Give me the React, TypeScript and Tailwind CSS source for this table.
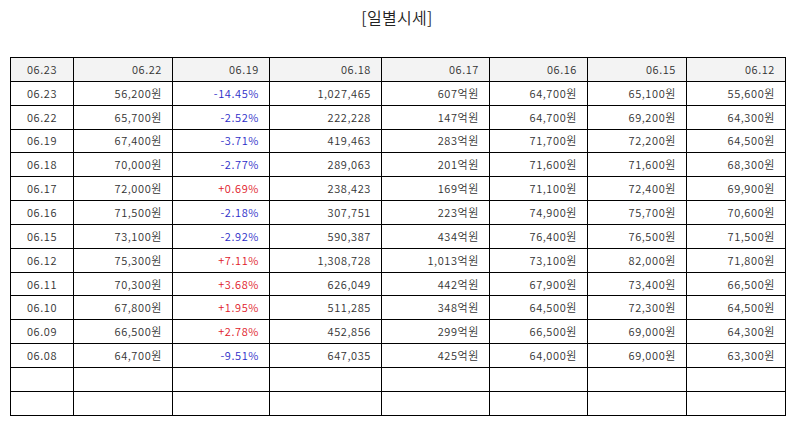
const HEAD = ['06.23', '06.22', '06.19', '06.18', '06.17', '06.16', '06.15', '06.12'];

const ROWS = [
  ['06.23', '56,200원', '-14.45%', '1,027,465', '607억원', '64,700원', '65,100원', '55,600원'],
  ['06.22', '65,700원', '-2.52%', '222,228', '147억원', '64,700원', '69,200원', '64,300원'],
  ['06.19', '67,400원', '-3.71%', '419,463', '283억원', '71,700원', '72,200원', '64,500원'],
  ['06.18', '70,000원', '-2.77%', '289,063', '201억원', '71,600원', '71,600원', '68,300원'],
  ['06.17', '72,000원', '+0.69%', '238,423', '169억원', '71,100원', '72,400원', '69,900원'],
  ['06.16', '71,500원', '-2.18%', '307,751', '223억원', '74,900원', '75,700원', '70,600원'],
  ['06.15', '73,100원', '-2.92%', '590,387', '434억원', '76,400원', '76,500원', '71,500원'],
  ['06.12', '75,300원', '+7.11%', '1,308,728', '1,013억원', '73,100원', '82,000원', '71,800원'],
  ['06.11', '70,300원', '+3.68%', '626,049', '442억원', '67,900원', '73,400원', '66,500원'],
  ['06.10', '67,800원', '+1.95%', '511,285', '348억원', '64,500원', '72,300원', '64,500원'],
  ['06.09', '66,500원', '+2.78%', '452,856', '299억원', '66,500원', '69,000원', '64,300원'],
  ['06.08', '64,700원', '-9.51%', '647,035', '425억원', '64,000원', '69,000원', '63,300원'],
  ['', '', '', '', '', '', '', ''],
  ['', '', '', '', '', '', '', ''],
];

const WIDTHS = ['w-[63px]', 'w-[99px]', 'w-[97px]', 'w-[112px]', 'w-[108px]', 'w-[98px]', 'w-[99px]', 'w-[99px]'];

function rateColor(v: string) {
  if (v.startsWith('-')) return 'text-[#2d2dc8]';
  if (v.startsWith('+')) return 'text-[#e0202a]';
  return 'text-[#333]';
}

export default function App() {
  return (
    <div className="w-[794px] h-[425px] bg-white text-[#333] overflow-hidden" style={{ fontFamily: '"Noto Sans CJK KR", "Noto Sans", sans-serif' }}>
      <h1 className="h-[57px] pt-[5px] text-center text-[16px] font-[350] text-[#222] leading-[24px] tracking-[0.3px]">[일별시세]</h1>
      <table className="ml-[10px] w-[775px] table-fixed border-collapse text-[11px] leading-none font-[350] tracking-[0.6px]">
        <colgroup>
          {WIDTHS.map((w, i) => (
            <col key={i} className={w} />
          ))}
        </colgroup>
        <thead>
          <tr className="bg-[#f3f3f3]">
            {HEAD.map((h, i) => (
              <th key={i} className={`h-[23.85px] border border-black font-[350] px-[10px] ${i === 0 ? 'text-center' : 'text-right'}`}>
                {h}
              </th>
            ))}
          </tr>
        </thead>
        <tbody>
          {ROWS.map((r, ri) => (
            <tr key={ri}>
              {r.map((c, ci) => (
                <td
                  key={ci}
                  className={`h-[23.85px] border border-black px-[10px] ${ci === 0 ? 'text-center' : 'text-right'} ${ci === 2 ? rateColor(c) : ''}`}
                >
                  {c}
                </td>
              ))}
            </tr>
          ))}
        </tbody>
      </table>
    </div>
  );
}
